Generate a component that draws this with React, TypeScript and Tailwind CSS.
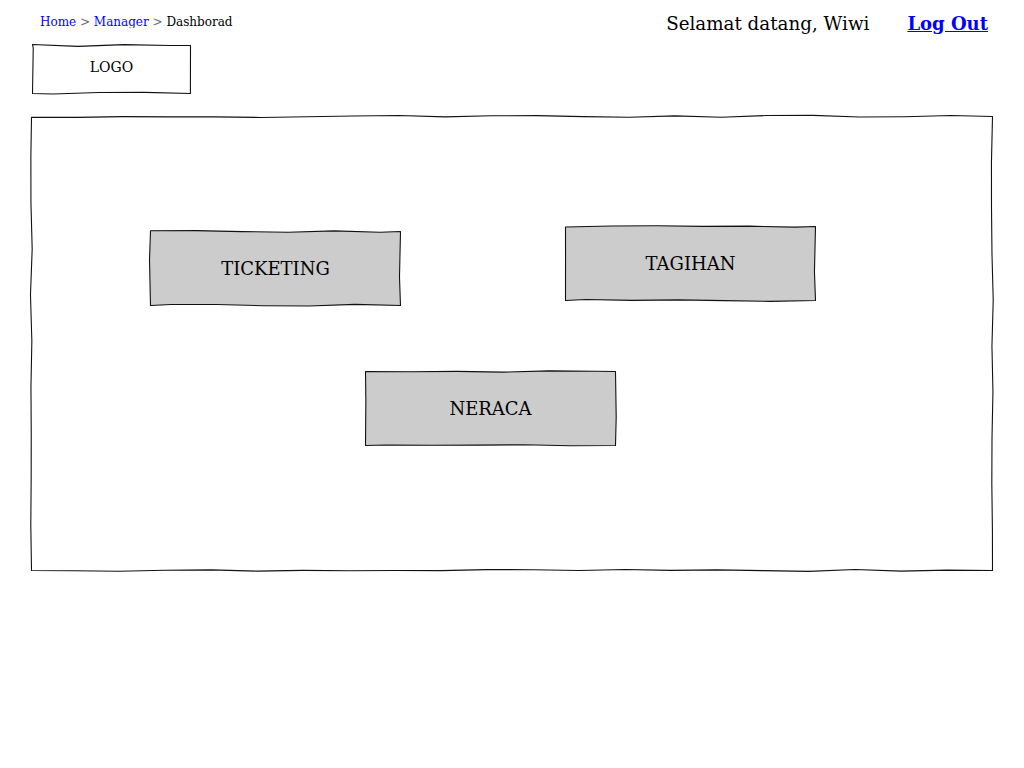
import React from "react";

// deterministic jitter so the sketch lines look hand drawn but stay the same each render
function rand(seed: number) {
  const x = Math.sin(seed * 9301 + 49297) * 233280;
  return x - Math.floor(x);
}

function sketchPath(w: number, h: number, seed: number) {
  const pts: string[] = [];
  const step = 46;
  const j = (i: number) => (rand(seed + i) - 0.5) * 2.2;
  let i = 0;
  pts.push(`M0.5 ${0.5 + j(i++)}`);
  for (let x = step; x < w; x += step) pts.push(`L${x} ${0.5 + j(i++)}`);
  pts.push(`L${w - 0.5} 0.5`);
  for (let y = step; y < h; y += step) pts.push(`L${w - 0.5 + j(i++)} ${y}`);
  pts.push(`L${w - 0.5} ${h - 0.5}`);
  for (let x = w - step; x > 0; x -= step) pts.push(`L${x} ${h - 0.5 + j(i++)}`);
  pts.push(`L0.5 ${h - 0.5}`);
  for (let y = h - step; y > 0; y -= step) pts.push(`L${0.5 + j(i++)} ${y}`);
  pts.push("Z");
  return pts.join(" ");
}

function SketchBox({
  w,
  h,
  seed,
  fill = "#ffffff",
  className = "",
  children,
}: {
  w: number;
  h: number;
  seed: number;
  fill?: string;
  className?: string;
  children?: React.ReactNode;
}) {
  return (
    <div className={`relative shrink-0 ${className}`} style={{ width: w, height: h }}>
      <svg className="absolute inset-0 overflow-visible" width={w} height={h}>
        <path d={sketchPath(w, h, seed)} fill={fill} stroke="#111" strokeWidth={1.1} strokeLinejoin="round" />
      </svg>
      <div className="relative flex h-full w-full items-center justify-center">{children}</div>
    </div>
  );
}

export default function App() {
  return (
    <div className="h-[768px] w-[1024px] bg-white text-black" style={{ fontFamily: '"DejaVu Serif", serif' }}>
      <div className="flex h-[45px] items-start justify-between">
        <div className="ml-[40px] mt-[15px] h-[13px] overflow-hidden text-[12px] leading-[15px]">
          <a href="#" className="text-[#0000ff]">Home</a>
          <span className="text-gray-500"> &gt; </span>
          <a href="#" className="text-[#0000ff]">Manager</a>
          <span className="text-gray-500"> &gt; </span>
          <span>Dashborad</span>
        </div>
        <div className="mr-[36px] mt-[12px] flex items-center gap-[38px] leading-6">
          <span className="text-[18.3px]">Selamat datang, Wiwi</span>
          <a href="#" className="text-[18px] font-bold text-[#0000ff] underline">Log Out</a>
        </div>
      </div>

      <SketchBox w={159} h={49} seed={3} className="ml-[32px]">
        <span className="pb-[4px] text-[14px]">LOGO</span>
      </SketchBox>

      <SketchBox w={962} h={455} seed={11} className="ml-[31px] mt-[22px]">
        <div className="flex h-full w-full flex-col">
          <div className="flex items-start">
            <SketchBox w={251} h={75} seed={21} fill="#cccccc" className="ml-[119px] mt-[115px]">
              <span className="text-[18px]">TICKETING</span>
            </SketchBox>
            <SketchBox w={251} h={75} seed={37} fill="#cccccc" className="ml-[164px] mt-[110px]">
              <span className="text-[18px]">TAGIHAN</span>
            </SketchBox>
          </div>
          <SketchBox w={251} h={75} seed={53} fill="#cccccc" className="ml-[334px] mt-[65px]">
            <span className="text-[18px]">NERACA</span>
          </SketchBox>
        </div>
      </SketchBox>
    </div>
  );
}
